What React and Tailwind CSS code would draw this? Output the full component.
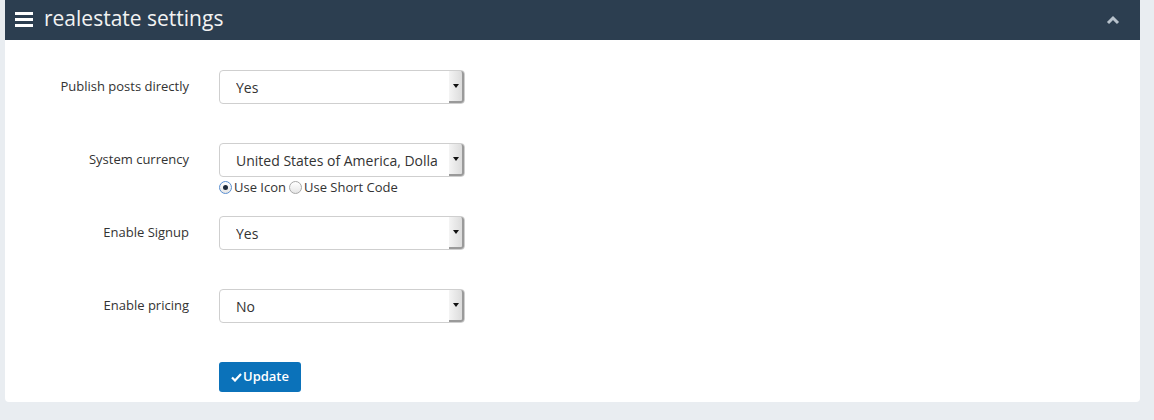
import React from "react";

function FakeSelect({ value }) {
  return (
    <div className="flex h-[34px] w-[246px] items-stretch rounded-[4px] border border-[#cfcfcf] bg-white">
      <div className="ml-[16px] mr-[11px] flex min-w-0 flex-1 items-center overflow-hidden whitespace-nowrap text-[14px] text-[#333]">
        {value}
      </div>
      <div className="flex w-[15px] shrink-0 items-center justify-center rounded-r-[3px] border-r-2 border-b-2 border-[#9a9a9a] bg-gradient-to-r from-[#f4f4f4] to-[#dcdcdc]">
        <svg width="6" height="4" viewBox="0 0 6 4">
          <path d="M0 0h6L3 4z" fill="#111" />
        </svg>
      </div>
    </div>
  );
}

function Row({ label, children }) {
  return (
    <div className="flex h-[73px] items-start">
      <div className="flex h-[34px] w-[184px] items-center justify-end text-[13px] text-[#333]">
        {label}
      </div>
      <div className="ml-[30px]">{children}</div>
    </div>
  );
}

function Radio({ checked, label }) {
  return (
    <label className="flex items-center text-[13px] text-[#333]">
      <span
        className={`mr-[2px] flex h-[13px] w-[13px] items-center justify-center rounded-full border bg-gradient-to-b from-white to-[#e6e6e6] ${
          checked ? "border-[#5b8fd0]" : "border-[#a8a8a8]"
        }`}
      >
        {checked && <span className="h-[5px] w-[5px] rounded-full bg-[#1d2a3a]" />}
      </span>
      {label}
    </label>
  );
}

export default function App() {
  return (
    <div
      className="h-[420px] w-[1154px] bg-[#e9edf1]"
      style={{ fontFamily: '"Open Sans", "Liberation Sans", sans-serif' }}
    >
      <div className="ml-[5px] w-[1135px] rounded-b-[4px] bg-white">
        {/* Header */}
        <div className="flex h-[40px] items-center bg-[#2c3e50] pl-[10px] pr-[14px]">
          <svg width="18" height="17" viewBox="0 0 18 17" className="mt-[-2px]">
            <rect x="0" y="1" width="18" height="3" fill="#fff" />
            <rect x="0" y="7" width="18" height="3" fill="#fff" />
            <rect x="0" y="13" width="18" height="3" fill="#fff" />
          </svg>
          <span className="ml-[11px] mt-[-3px] text-[21px] text-[#f2f2f2]">realestate settings</span>
          <svg width="14" height="10" viewBox="0 0 14 10" className="ml-auto mr-[6px]">
            <path d="M2 8l5-5 5 5" stroke="#b8c2cc" strokeWidth="3" fill="none" />
          </svg>
        </div>

        {/* Body */}
        <div className="pt-[30px] pb-[10px]">
          <Row label="Publish posts directly">
            <FakeSelect value="Yes" />
          </Row>
          <Row label="System currency">
            <FakeSelect value="United States of America, Dollars" />
            <div className="mt-[1px] flex items-center gap-[3px]">
              <Radio checked label="Use Icon" />
              <Radio label="Use Short Code" />
            </div>
          </Row>
          <Row label="Enable Signup">
            <FakeSelect value="Yes" />
          </Row>
          <Row label="Enable pricing">
            <FakeSelect value="No" />
          </Row>
          <div className="ml-[214px] flex">
            <button className="flex h-[30px] w-[82px] items-center justify-center rounded-[3px] bg-[#0b72ba] text-[13px] font-semibold text-white">
              <svg width="11" height="9" viewBox="0 0 11 9" className="mr-[1px]">
                <path d="M1 4.5l3 3 6-6.5" stroke="#fff" strokeWidth="2.2" fill="none" />
              </svg>
              Update
            </button>
          </div>
        </div>
      </div>
    </div>
  );
}
